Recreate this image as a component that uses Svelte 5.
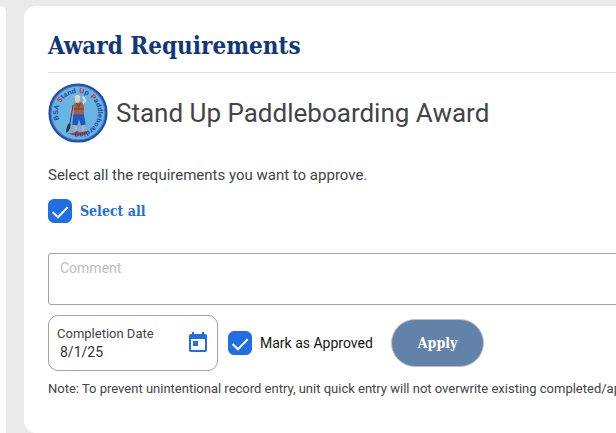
<script>
  let selectAll = $state(true);
  let approved = $state(true);
  let comment = $state('');
  let completionDate = $state('8/1/25');
</script>

{#snippet tick()}
  <svg class="tick" viewBox="0 0 24 24" aria-hidden="true">
    <path d="M4.5 13 L10 18.3 L19.7 8.2" fill="none" stroke="#fff" stroke-width="2" />
  </svg>
{/snippet}

<div class="page">
  <aside class="side"></aside>
  <main class="card">
    <h1>Award Requirements</h1>

    <header class="award">
      <svg class="badge" viewBox="0 0 60 60" role="img" aria-label="Stand Up Paddleboarding patch">
        <defs>
          <path id="ring" d="M11.2 36.8 A20 20 0 1 1 30 50 A20 20 0 0 1 11.2 36.8" />
        </defs>
        <circle cx="30" cy="30" r="28.4" fill="#69b5e2" stroke="#254dab" stroke-width="2.4" />
        <circle cx="30" cy="30" r="26.8" fill="none" stroke="#3f75c0" stroke-width="0.8" />
        <path d="M19.5 50.5 L40 48.6 L38 51.6 Q28 53.6 19.5 50.5Z" fill="#c92f42" />
        <path d="M27 40 L28 49 M35 40 L35.5 48.5" fill="none" stroke="#dba88c" stroke-width="2.6" />
        <path d="M25.5 49.6 L29.5 48 L29.5 50Z M33.7 49.5 L38 48 L38 49.8Z" fill="#c62334" />
        <path d="M25.4 31 H35.8 L37.8 41.4 L33 42.6 L31 36 L29.4 42.6 L24.2 41.8Z" fill="#2456c4" />
        <path d="M26.5 21.8 L22.8 27.5 L23.5 31" fill="none" stroke="#d9a184" stroke-width="2" />
        <path d="M34.5 20.5 L37.2 17.3 L34.8 13.5" fill="none" stroke="#ead9cb" stroke-width="2" />
        <path d="M26 20.5 L34.2 19.3 L36 23 L35.8 31.2 L25.5 31.5Z" fill="#a65f42" />
        <path d="M28.2 20 L30.7 24 L32.6 19.8 M26 26 H35.7" fill="none" stroke="#6d3b37" stroke-width="1" />
        <ellipse cx="29.5" cy="16.2" rx="2.4" ry="3.3" fill="#ecc9b5" />
        <path d="M26.4 14.8 Q26.8 11.8 30 12 Q32.7 12.3 32.2 15 L29.3 14Z" fill="#ddd9dc" />
        <path d="M25 22 L21 46" stroke="#3a374b" stroke-width="1" />
        <path d="M20.7 40.5 Q18.2 43.5 18.1 49.5 Q21.6 49.6 22.6 41Z" fill="#302d42" />
        <g class="patch-text">
          <text><textPath href="#ring" startOffset="0">BSA</textPath></text>
          <text><textPath href="#ring" startOffset="17"><tspan class="red">S</tspan>tand</textPath></text>
          <text><textPath href="#ring" startOffset="39"><tspan class="red">U</tspan>p</textPath></text>
          <text><textPath href="#ring" startOffset="51"><tspan class="red">P</tspan>addleboarding</textPath></text>
        </g>
      </svg>
      <h2>Stand Up Paddleboarding Award</h2>
    </header>

    <p class="intro">Select all the requirements you want to approve.</p>

    <label class="check all">
      <span class="box"><input type="checkbox" bind:checked={selectAll} />{@render tick()}</span>
      <span>Select all</span>
    </label>

    <textarea class="comment" placeholder="Comment" aria-label="Comment" bind:value={comment}></textarea>

    <div class="actions">
      <div class="date">
        <div class="date-text">
          <label for="completion">Completion Date</label>
          <input id="completion" type="text" bind:value={completionDate} />
        </div>
        <button class="calendar" type="button" aria-label="Choose date">
          <svg viewBox="0 0 24 24" aria-hidden="true">
            <path fill="#1f6ee6" d="M19 3h-1V1h-2v2H8V1H6v2H5c-1.100 0-2 .9-2 2v14c0 1.100.9 2 2 2h14c1.100 0 2-.9 2-2V5c0-1.100-.9-2-2-2zm0 16H5V8h14v11zM7 10h5v5H7z" />
          </svg>
        </button>
      </div>
      <label class="check approved">
        <span class="box"><input type="checkbox" bind:checked={approved} />{@render tick()}</span>
        <span>Mark as Approved</span>
      </label>
      <button class="apply" type="button">Apply</button>
    </div>

    <p class="note">Note: To prevent unintentional record entry, unit quick entry will not overwrite existing completed/approved</p>
  </main>
</div>

<style>
  :global(body) {
    background: #eaeaea;
  }
  .page {
    display: flex;
    gap: 18px;
    padding-top: 6px;
    overflow: hidden;
    font-family: Roboto, "Liberation Sans", sans-serif;
    color: #424447;
  }
  .side {
    flex: 0 0 6px;
    background: #fff;
    border-top-right-radius: 12px;
  }
  .card {
    box-sizing: border-box;
    flex: 1 0 760px;
    padding: 24px;
    padding-bottom: 36px;
    background: #fff;
    border-radius: 12px;
  }
  h1, h2, p {
    margin: 0;
  }
  h1 {
    padding-bottom: 10px;
    border-bottom: 1px solid #dedede;
    font: bold 24px/32px "Roboto Slab", "DejaVu Serif Condensed", "DejaVu Serif", serif;
    color: #12377c;
  }
  .award {
    display: flex;
    align-items: center;
    gap: 8px;
    padding-top: 10px;
  }
  .badge {
    width: 60px;
    height: 60px;
  }
  .patch-text {
    font: bold 7px "Liberation Sans", sans-serif;
    fill: #1f439c;
  }
  .red {
    fill: #d32032;
  }
  h2 {
    font-size: 26px;
    line-height: 32px;
    font-weight: 400;
  }
  .intro {
    margin-top: 22px;
    font-size: 15px;
    line-height: 20px;
  }
  .check {
    display: flex;
    align-items: center;
    gap: 8px;
    font-size: 14px;
    line-height: 20px;
  }
  .all {
    width: max-content;
    margin-top: 14px;
    font: bold 14px/20px "Roboto Slab", "DejaVu Serif Condensed", "DejaVu Serif", serif;
    color: #1f6ee6;
  }
  .approved {
    color: #151515;
  }
  .box {
    display: grid;
    width: 24px;
    height: 24px;
  }
  .box input {
    grid-area: 1 / 1;
    appearance: none;
    width: 24px;
    height: 24px;
    margin: 0;
    border: 1px solid #1f6ee6;
    border-radius: 6px;
  }
  .box input:checked {
    background: #1f6ee6;
  }
  .tick {
    grid-area: 1 / 1;
    width: 24px;
    height: 24px;
    pointer-events: none;
  }
  .comment {
    display: block;
    box-sizing: border-box;
    width: 100%;
    height: 52px;
    margin-top: 30px;
    padding: 4px 11px;
    border: 1px solid #a2a2a2;
    border-radius: 3px;
    resize: none;
    font: 14px/20px Roboto, sans-serif;
    color: #424447;
  }
  .comment::placeholder {
    color: #bdbdbd;
  }
  .actions {
    display: flex;
    align-items: center;
    gap: 10px;
    margin-top: 10px;
  }
  .date {
    box-sizing: border-box;
    display: flex;
    align-items: center;
    width: 170px;
    height: 56px;
    padding: 0 7px 0 8px;
    border: 1px solid #a2a2a2;
    border-radius: 10px;
  }
  .date-text {
    flex: 1;
    display: flex;
    flex-direction: column;
    min-width: 0;
  }
  .date-text label {
    font-size: 13px;
    line-height: 18px;
  }
  .date-text input {
    width: 100%;
    box-sizing: border-box;
    padding: 0 3px;
    border: 0;
    background: none;
    font: 14px/18px Roboto, sans-serif;
    color: #333;
  }
  .calendar {
    padding: 0;
    border: 0;
    background: none;
  }
  .calendar svg {
    display: block;
    width: 24px;
    height: 24px;
  }
  .apply {
    height: 48px;
    margin-left: 8px;
    padding: 0 26px;
    border: 1px solid #bcc0c6;
    border-radius: 24px;
    background: #6382a9;
    font: bold 14px/20px "Roboto Slab", "DejaVu Serif Condensed", "DejaVu Serif", serif;
    color: #fff;
  }
  .note {
    margin-top: 10px;
    font-size: 13px;
    line-height: 16px;
    white-space: nowrap;
  }
</style>
